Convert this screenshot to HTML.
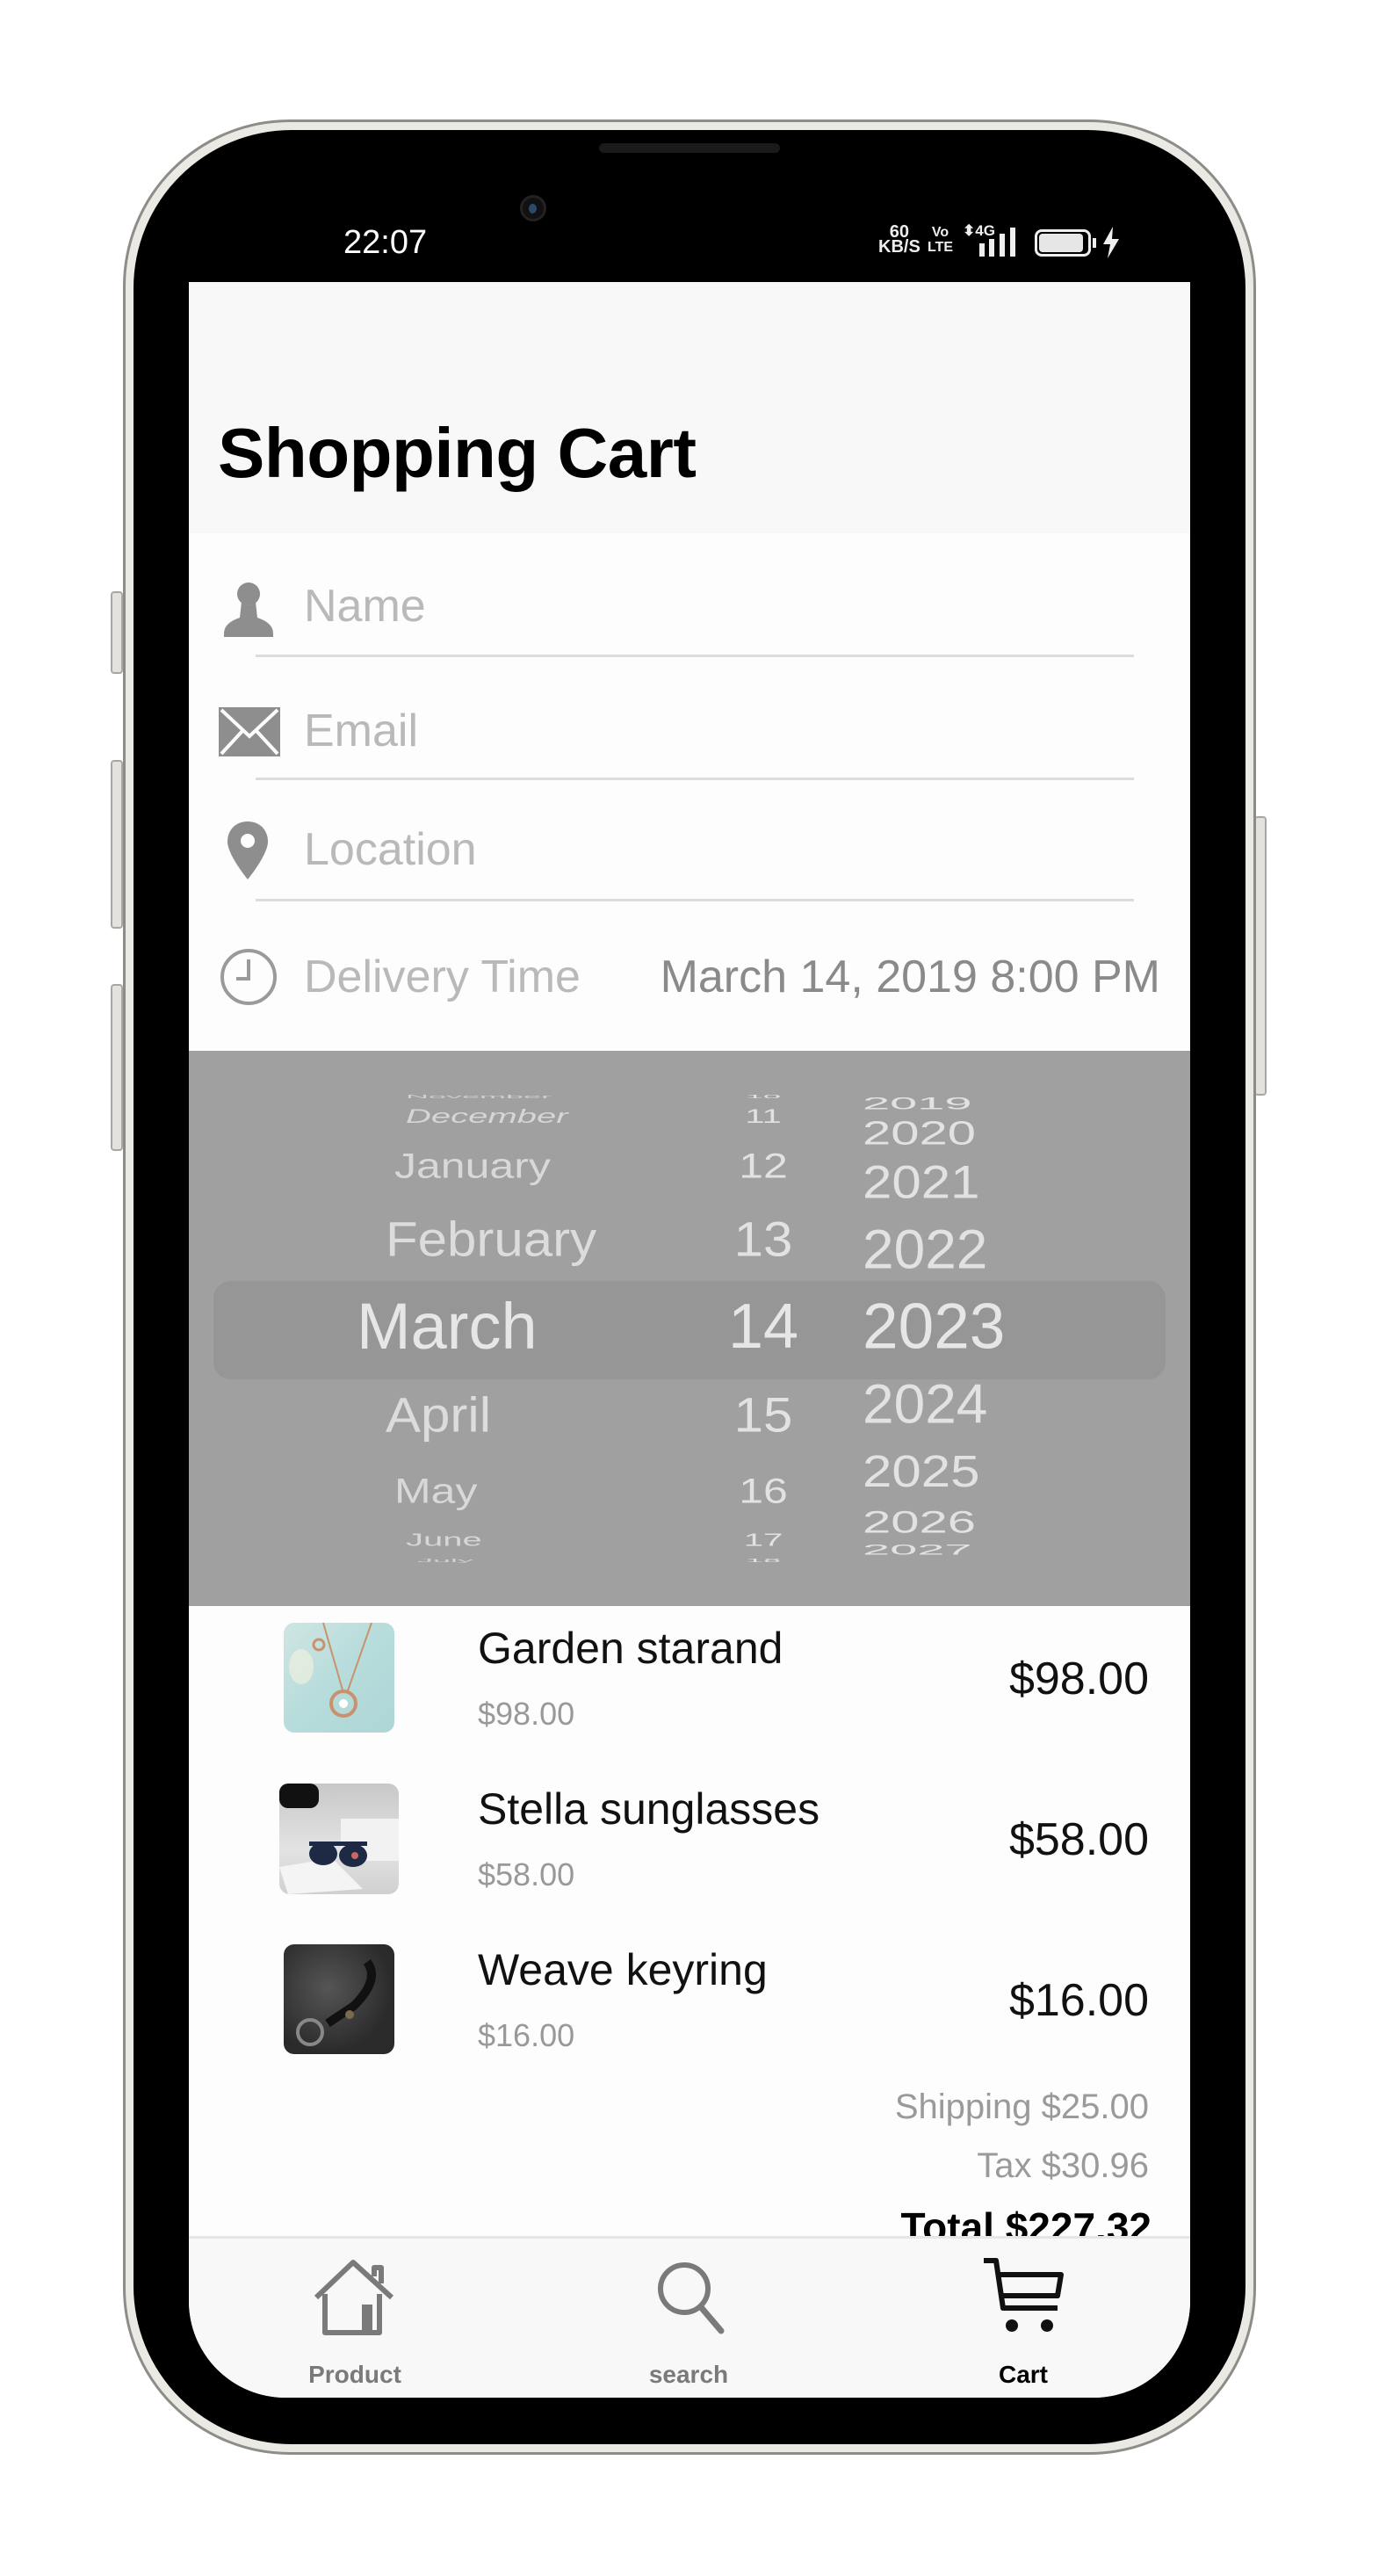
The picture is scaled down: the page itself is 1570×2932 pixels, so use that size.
<!DOCTYPE html>
<html><head><meta charset="utf-8"><style>
*{margin:0;padding:0;box-sizing:border-box}
body{width:1570px;height:2932px;background:#fff;position:relative;overflow:hidden;font-family:"Liberation Sans",Arial,sans-serif}
.a{position:absolute}
.btn{position:absolute;background:#e4e2dc;border:2px solid #a9a7a2;border-radius:4px}
.t{position:absolute;white-space:nowrap;line-height:1}
.pk{position:absolute;white-space:nowrap;line-height:1;color:#e2e2e2;transform-origin:left center}
.pd{position:absolute;white-space:nowrap;line-height:1;color:#e2e2e2;transform-origin:center center;width:120px;text-align:center}
</style></head><body>
<div class="btn" style="left:126px;top:673px;width:14px;height:94px"></div>
<div class="btn" style="left:126px;top:865px;width:14px;height:192px"></div>
<div class="btn" style="left:126px;top:1120px;width:14px;height:190px"></div>
<div class="btn" style="left:1428px;top:929px;width:14px;height:318px"></div>
<div class="a" style="left:140px;top:136px;width:1290px;height:2658px;border-radius:190px;background:#ebe9e3;border:3px solid #8e8c88"></div>
<div class="a" style="left:152px;top:148px;width:1266px;height:2634px;border-radius:180px;background:#000"></div>
<div class="a" style="left:682px;top:163px;width:206px;height:11px;border-radius:6px;background:#1a1a1a"></div>
<div class="a" style="left:592px;top:222px;width:30px;height:30px;border-radius:50%;background:#111;border:3px solid #222"></div>
<div class="a" style="left:602px;top:232px;width:9px;height:11px;border-radius:50%;background:#2a4a6a"></div>
<div class="t" style="left:391px;top:257px;font-size:38px;color:#fff">22:07</div>
<div class="t" style="left:1000px;top:256px;font-size:20px;color:#eee;font-weight:bold;line-height:17px;text-align:center">60<br>KB/S</div>
<div class="t" style="left:1056px;top:256px;font-size:16px;color:#eee;font-weight:bold;line-height:17px;text-align:center">Vo<br>LTE</div>
<div class="t" style="left:1096px;top:254px;font-size:17px;color:#eee;font-weight:bold">⬍4G</div>
<div class="a" style="left:1115px;top:277px;width:6px;height:15px;background:#eee"></div>
<div class="a" style="left:1126px;top:272px;width:6px;height:20px;background:#eee"></div>
<div class="a" style="left:1138px;top:266px;width:6px;height:26px;background:#eee"></div>
<div class="a" style="left:1150px;top:259px;width:6px;height:33px;background:#eee"></div>
<div class="a" style="left:1178px;top:261px;width:64px;height:31px;border:3px solid #eee;border-radius:8px"></div>
<div class="a" style="left:1183px;top:266px;width:50px;height:21px;background:#e6e6e6;border-radius:4px"></div>
<div class="a" style="left:1244px;top:271px;width:4px;height:11px;background:#eee"></div>
<svg class="a" style="left:1254px;top:258px" width="22" height="36" viewBox="0 0 22 36"><path d="M13 0 L2 20 H10 L7 36 L20 14 H12 Z" fill="#eee"/></svg>

<div class="a" style="left:215px;top:321px;width:1140px;height:2408px;background:#fdfdfd;border-radius:0 0 110px 110px;overflow:hidden">
  <div class="a" style="left:0;top:0;width:1140px;height:286px;background:#f8f8f8"></div>
  <div class="t" style="left:33px;top:155px;font-size:80px;font-weight:bold;color:#000;letter-spacing:-0.5px">Shopping Cart</div>

  <svg class="a" style="left:38px;top:338px" width="60" height="66" viewBox="0 0 60 66"><circle cx="30" cy="17" r="13" fill="#8e8e8e"/><path d="M22 26 Q30 34 38 26 L40 44 Q58 50 58 62 V66 H2 V62 Q2 50 20 44 Z" fill="#8e8e8e"/></svg>
  <div class="t" style="left:131px;top:343px;font-size:52px;color:#b9b9b9">Name</div>
  <div class="a" style="left:76px;top:424px;width:1000px;height:3px;background:#dcdcdc"></div>
  <svg class="a" style="left:33px;top:483px" width="72" height="58" viewBox="0 0 72 58"><rect x="1" y="1" width="70" height="56" fill="#8e8e8e"/><path d="M4 4 L36 34 L68 4" fill="none" stroke="#fdfdfd" stroke-width="4"/><path d="M4 54 L28 28 M68 54 L44 28" stroke="#fdfdfd" stroke-width="4"/></svg>
  <div class="t" style="left:131px;top:485px;font-size:52px;color:#b9b9b9">Email</div>
  <div class="a" style="left:76px;top:564px;width:1000px;height:3px;background:#dcdcdc"></div>
  <svg class="a" style="left:42px;top:612px" width="50" height="70" viewBox="0 0 50 70"><path d="M25 2 C11 2 2 12 2 25 C2 40 25 68 25 68 C25 68 48 40 48 25 C48 12 39 2 25 2 Z" fill="#8e8e8e"/><circle cx="25" cy="24" r="8" fill="#fdfdfd"/></svg>
  <div class="t" style="left:131px;top:620px;font-size:52px;color:#b9b9b9">Location</div>
  <div class="a" style="left:76px;top:702px;width:1000px;height:3px;background:#dcdcdc"></div>
  <svg class="a" style="left:34px;top:757px" width="68" height="68" viewBox="0 0 68 68"><circle cx="34" cy="34" r="30" fill="none" stroke="#9a9a9a" stroke-width="4"/><path d="M34 14 V36 H20" fill="none" stroke="#9a9a9a" stroke-width="4"/></svg>
  <div class="t" style="left:131px;top:765px;font-size:52px;color:#b9b9b9">Delivery Time</div>
  <div class="t" style="right:34px;top:765px;font-size:52px;color:#8a8a8a">March 14, 2019 8:00 PM</div>

  <div class="a" style="left:0;top:875px;width:1140px;height:632px;background:#a0a0a0;overflow:hidden">
    <div class="a" style="left:28px;top:262px;width:1084px;height:112px;background:#969696;border-radius:20px"></div>
    <div class="pk" style="left:247px;top:52px;font-size:36px;transform:translateY(-50%) scaleY(.15);color:#d0d0d0">November</div>
    <div class="pk" style="left:247px;top:75px;font-size:40px;font-style:italic;transform:translateY(-50%) scaleY(.55);color:#d6d6d6">December</div>
    <div class="pk" style="left:234px;top:131px;font-size:50px;transform:translateY(-50%) scaleY(.8);color:#d8d8d8">January</div>
    <div class="pk" style="left:224px;top:215px;font-size:60px;transform:translateY(-50%) scaleY(.92);color:#dcdcdc">February</div>
    <div class="pk" style="left:191px;top:314px;font-size:74px;transform:translateY(-50%);color:#e6e6e6">March</div>
    <div class="pk" style="left:224px;top:415px;font-size:60px;transform:translateY(-50%) scaleY(.92);color:#dcdcdc">April</div>
    <div class="pk" style="left:234px;top:501px;font-size:50px;transform:translateY(-50%) scaleY(.8);color:#d8d8d8">May</div>
    <div class="pk" style="left:247px;top:557px;font-size:40px;transform:translateY(-50%) scaleY(.5);color:#d6d6d6">June</div>
    <div class="pk" style="left:260px;top:580px;font-size:36px;transform:translateY(-50%) scaleY(.15);color:#d0d0d0">July</div>
    <div class="pd" style="left:594px;top:52px;font-size:36px;transform:translateY(-50%) scaleY(.15)">10</div>
    <div class="pd" style="left:594px;top:75px;font-size:40px;transform:translateY(-50%) scaleY(.55)">11</div>
    <div class="pd" style="left:594px;top:131px;font-size:50px;transform:translateY(-50%) scaleY(.8)">12</div>
    <div class="pd" style="left:594px;top:215px;font-size:60px;transform:translateY(-50%) scaleY(.92)">13</div>
    <div class="pd" style="left:594px;top:314px;font-size:72px;transform:translateY(-50%);color:#e6e6e6">14</div>
    <div class="pd" style="left:594px;top:415px;font-size:60px;transform:translateY(-50%) scaleY(.92)">15</div>
    <div class="pd" style="left:594px;top:501px;font-size:50px;transform:translateY(-50%) scaleY(.8)">16</div>
    <div class="pd" style="left:594px;top:557px;font-size:40px;transform:translateY(-50%) scaleY(.5)">17</div>
    <div class="pd" style="left:594px;top:580px;font-size:36px;transform:translateY(-50%) scaleY(.15)">18</div>
    <div class="pd" style="left:767px;top:60px;font-size:56px;transform:translateY(-50%) scaleY(.35)">2019</div>
    <div class="pd" style="left:767px;top:94px;font-size:58px;transform:translateY(-50%) scaleY(.65)">2020</div>
    <div class="pd" style="left:767px;top:150px;font-size:60px;transform:translateY(-50%) scaleY(.88)">2021</div>
    <div class="pd" style="left:767px;top:226px;font-size:64px;transform:translateY(-50%) scaleY(.98)">2022</div>
    <div class="pd" style="left:767px;top:314px;font-size:73px;transform:translateY(-50%);color:#e6e6e6">2023</div>
    <div class="pd" style="left:767px;top:402px;font-size:64px;transform:translateY(-50%) scaleY(.98)">2024</div>
    <div class="pd" style="left:767px;top:479px;font-size:60px;transform:translateY(-50%) scaleY(.85)">2025</div>
    <div class="pd" style="left:767px;top:537px;font-size:58px;transform:translateY(-50%) scaleY(.6)">2026</div>
    <div class="pd" style="left:767px;top:568px;font-size:56px;transform:translateY(-50%) scaleY(.3)">2027</div>
  </div>

  <div class="a" style="left:108px;top:1526px;width:126px;height:125px;border-radius:12px;background:linear-gradient(135deg,#cfe6e3,#b6dcdb 50%,#aed6d6)"></div>
  <svg class="a" style="left:108px;top:1526px" width="126" height="125"><ellipse cx="20" cy="50" rx="14" ry="20" fill="#e8eee0" opacity=".8"/><path d="M45 0 L68 80 M100 0 L72 80" stroke="#c9926e" stroke-width="2"/><circle cx="68" cy="92" r="14" fill="none" stroke="#c9926e" stroke-width="4"/><circle cx="68" cy="92" r="5" fill="#fff"/><circle cx="40" cy="25" r="6" fill="none" stroke="#c9926e" stroke-width="3"/></svg>
  <div class="t" style="left:329px;top:1530px;font-size:50px;color:#111">Garden starand</div>
  <div class="t" style="left:329px;top:1612px;font-size:36px;color:#999">$98.00</div>
  <div class="t" style="right:47px;top:1564px;font-size:52px;color:#111">$98.00</div>

  <div class="a" style="left:103px;top:1709px;width:136px;height:126px;border-radius:12px;background:linear-gradient(180deg,#c8c8c8,#e3e3e3 60%,#d0d0d0)"></div>
  <svg class="a" style="left:103px;top:1709px" width="136" height="126"><rect x="0" y="0" width="45" height="28" rx="10" fill="#111"/><rect x="70" y="40" width="66" height="48" fill="#f2f2f2"/><path d="M0 95 L60 85 L95 120 L10 126 Z" fill="#f4f4f4"/><ellipse cx="50" cy="80" rx="16" ry="13" fill="#1e2a44"/><ellipse cx="84" cy="82" rx="16" ry="13" fill="#1e2a44"/><rect x="34" y="66" width="66" height="5" fill="#1e2a44"/><circle cx="86" cy="82" r="4" fill="#c66"/></svg>
  <div class="t" style="left:329px;top:1713px;font-size:50px;color:#111">Stella sunglasses</div>
  <div class="t" style="left:329px;top:1795px;font-size:36px;color:#999">$58.00</div>
  <div class="t" style="right:47px;top:1747px;font-size:52px;color:#111">$58.00</div>

  <div class="a" style="left:108px;top:1892px;width:126px;height:125px;border-radius:12px;background:radial-gradient(circle at 40% 40%,#555,#2a2a2a 70%)"></div>
  <svg class="a" style="left:108px;top:1892px" width="126" height="125"><path d="M95 20 Q110 40 80 70 L50 90" stroke="#111" stroke-width="10" fill="none"/><circle cx="30" cy="100" r="14" fill="none" stroke="#888" stroke-width="4"/><circle cx="75" cy="80" r="5" fill="#7a6a50"/></svg>
  <div class="t" style="left:329px;top:1896px;font-size:50px;color:#111">Weave keyring</div>
  <div class="t" style="left:329px;top:1978px;font-size:36px;color:#999">$16.00</div>
  <div class="t" style="right:47px;top:1930px;font-size:52px;color:#111">$16.00</div>

  <div class="t" style="right:47px;top:2057px;font-size:40px;color:#9a9a9a">Shipping $25.00</div>
  <div class="t" style="right:47px;top:2124px;font-size:40px;color:#9a9a9a">Tax $30.96</div>
  <div class="t" style="right:44px;top:2191px;font-size:46px;color:#000;font-weight:bold">Total $227.32</div>

  <div class="a" style="left:0;top:2224px;width:1140px;height:184px;background:#f8f8f8;border-top:3px solid #e6e6e6"></div>
  <svg class="a" style="left:143px;top:2250px" width="92" height="88" viewBox="0 0 92 88"><path d="M12 40 V84 H74 V40 M2 44 L44 4 L88 44 M68 20 V10 H76 V28" fill="none" stroke="#7a7a7a" stroke-width="6" stroke-linejoin="round"/><rect x="54" y="52" width="12" height="32" fill="#7a7a7a"/></svg>
  <div class="t" style="left:128px;top:2368px;width:122px;text-align:center;font-size:28px;color:#7a7a7a;font-weight:bold">Product</div>
  <svg class="a" style="left:530px;top:2250px" width="82" height="88" viewBox="0 0 82 88"><circle cx="34" cy="34" r="27" fill="none" stroke="#7a7a7a" stroke-width="6"/><path d="M53 55 L76 82" stroke="#7a7a7a" stroke-width="7" stroke-linecap="round"/></svg>
  <div class="t" style="left:508px;top:2368px;width:122px;text-align:center;font-size:28px;color:#7a7a7a;font-weight:bold">search</div>
  <svg class="a" style="left:903px;top:2248px" width="96" height="90" viewBox="0 0 96 90"><path d="M2 4 H16 L24 58 H86 M20 20 H90 L86 44 H22" fill="none" stroke="#111" stroke-width="6" stroke-linejoin="round"/><circle cx="34" cy="78" r="7" fill="#111"/><circle cx="74" cy="78" r="7" fill="#111"/></svg>
  <div class="t" style="left:889px;top:2368px;width:122px;text-align:center;font-size:28px;color:#000;font-weight:bold">Cart</div>
</div>
</body></html>
